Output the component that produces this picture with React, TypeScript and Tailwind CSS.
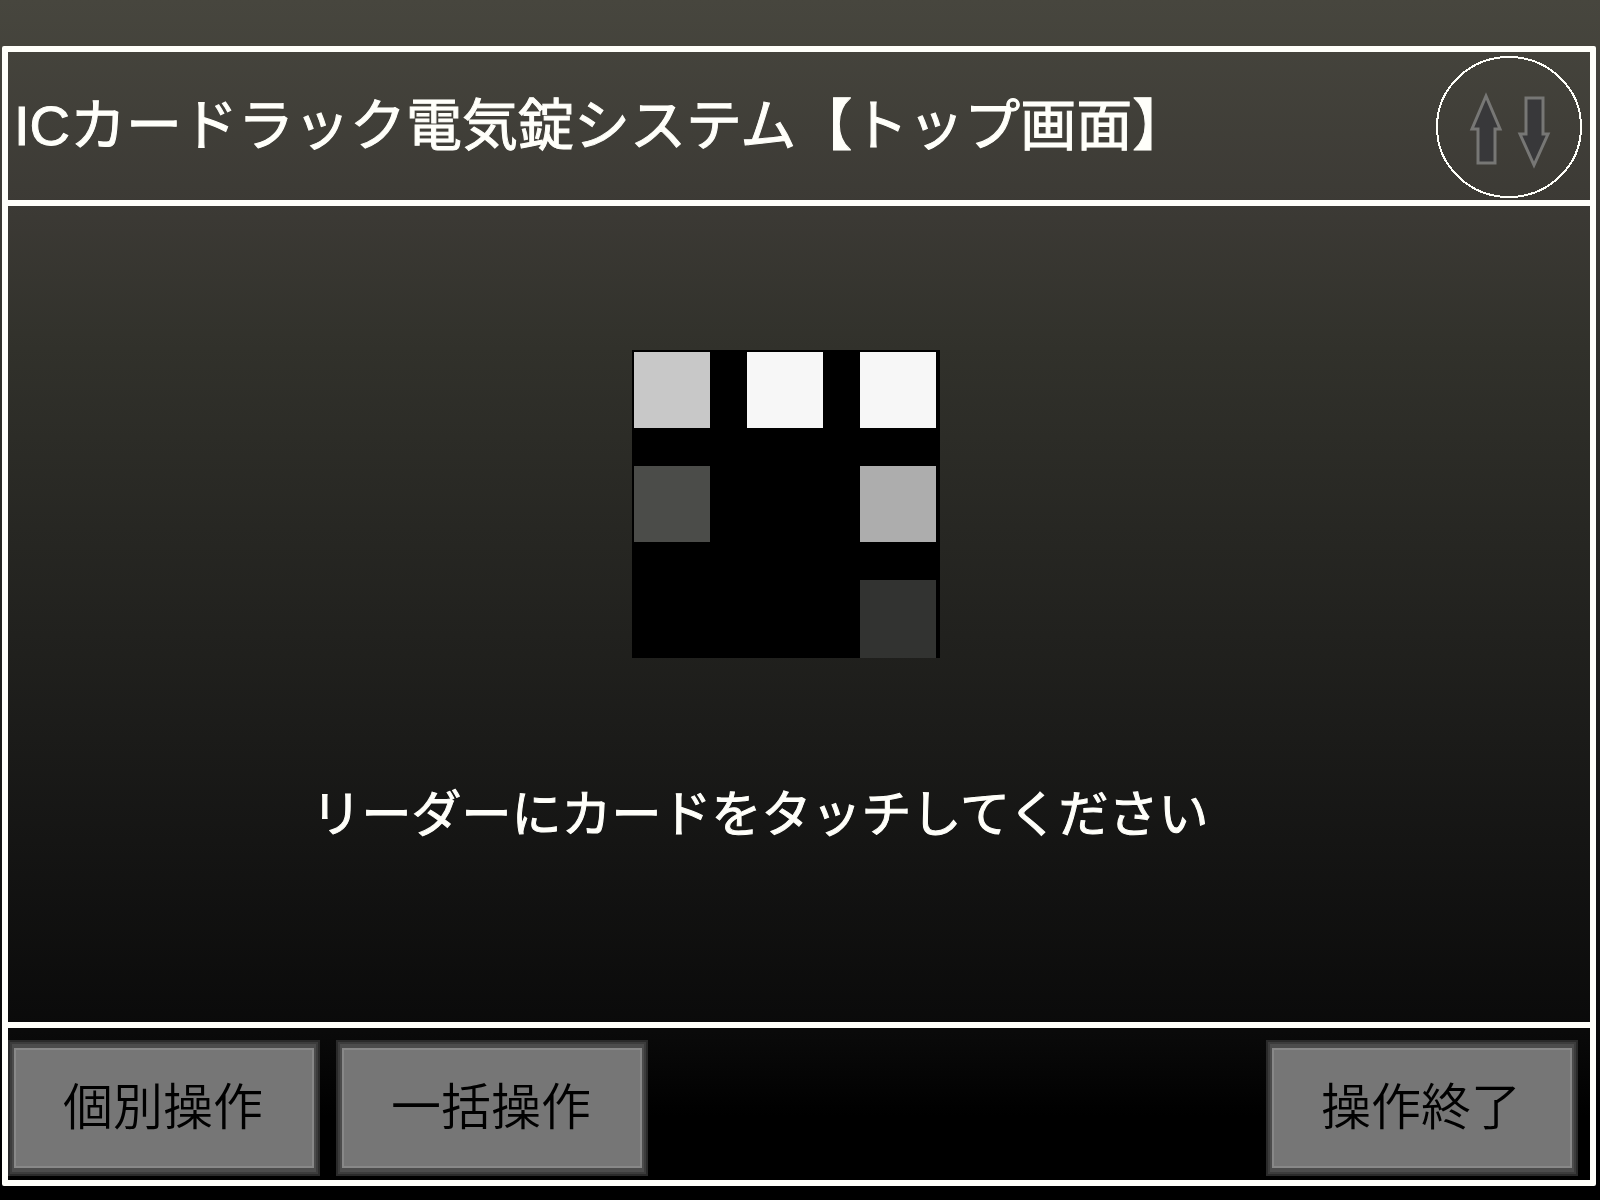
const tiles = [
  'bg-[#c8c8c8]',
  'bg-[#f7f7f7]',
  'bg-[#f7f7f7]',
  'bg-[#4b4c49]',
  'bg-black',
  'bg-[#adadad]',
  'bg-black',
  'bg-black',
  'bg-[#323331]',
];

function PanelButton({ label }: { label: string }) {
  return (
    <button
      type="button"
      className="h-[136px] w-[312px] border-2 border-[#2a2a2a] bg-[#4c4c4c] px-1 pt-1.5 pb-1.5 text-[50px] leading-none font-[350] text-black shadow-[inset_0_0_0_2px_#3c3c3c]"
    >
      <span className="flex h-full items-center justify-center border-2 border-[#888888] bg-[#767676] pr-0.5">
        {label}
      </span>
    </button>
  );
}

function LinkStatus() {
  return (
    <svg
      viewBox="0 0 146 142"
      className="mt-0.5 h-[142px] w-[146px] shrink-0"
      role="img"
      aria-label="通信状態"
    >
      <ellipse
        cx="73"
        cy="71"
        rx="72"
        ry="70"
        fill="none"
        stroke="#fffffa"
        strokeWidth="2"
        shapeRendering="crispEdges"
      />
      <g fill="#38383a" stroke="#777775" strokeWidth="3">
        <path d="M50 40 L64 73 H59 V107 H42 V73 H36 Z" />
        <path d="M90 42 H107 V78 H112 L98 109 L84 78 H90 Z" />
      </g>
    </svg>
  );
}

export default function App() {
  return (
    <div className="flex min-h-screen flex-col bg-linear-[180deg,#47463e_0%,#3c3a35_17%,#31312b_29%,#21211e_53%,#151514_70%,#0a0a0a_86%,#000000_93%] pt-[46px] pr-1 pb-3.5 pl-0.5 font-['Liberation_Sans','Noto_Sans_CJK_JP',sans-serif]">
      <div className="flex flex-1 flex-col rounded-xs border-6 border-[#fffffa]">
        <header className="flex h-[154px] items-center justify-between border-b-6 border-[#fffffa] pr-2 pl-1.5">
          <h1 className="text-[56px] leading-none font-normal whitespace-nowrap text-[#fffffa] [-webkit-text-stroke:1px_#fffffa]">
            ICカードラック電気錠システム【トップ画面】
          </h1>
          <LinkStatus />
        </header>

        <main className="flex flex-1 flex-col items-center border-b-6 border-[#fffffa] pt-36">
          <div className="pr-[26px]">
            <div className="grid size-[308px] grid-cols-[76px_76px_76px] grid-rows-[76px_76px_78px] gap-x-[37px] gap-y-[38px] bg-black pt-0.5 pl-0.5">
              {tiles.map((color, i) => (
                <div key={i} className={color} />
              ))}
            </div>
          </div>
          <p className="mt-[132px] pr-[78px] text-[50px] leading-none font-normal whitespace-nowrap text-[#fffffa] [-webkit-text-stroke:1px_#fffffa]">
            リーダーにカードをタッチしてください
          </p>
        </main>

        <footer className="flex gap-4 pt-3 pr-3 pb-1">
          <PanelButton label="個別操作" />
          <PanelButton label="一括操作" />
          <div className="flex-1" />
          <PanelButton label="操作終了" />
        </footer>
      </div>
    </div>
  );
}
